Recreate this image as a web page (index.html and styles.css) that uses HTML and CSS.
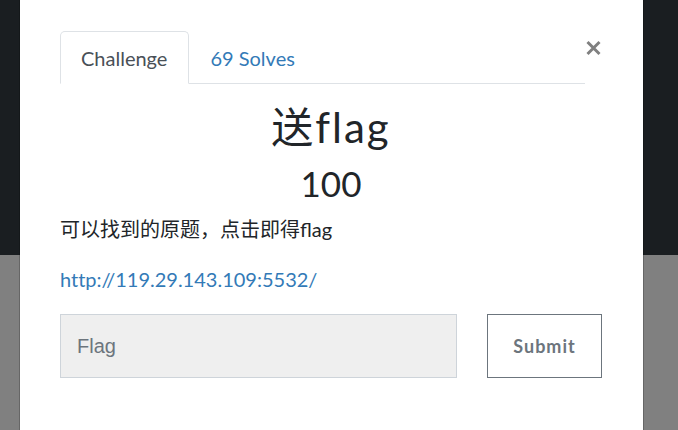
FILE: index.html
```html
<!DOCTYPE html>
<html lang="zh-CN">
<head>
<meta charset="utf-8">
<meta name="viewport" content="width=device-width, initial-scale=1">
<title>Challenge</title>
<link rel="stylesheet" href="styles.css">
</head>
<body>
<main class="modal" role="dialog" aria-labelledby="challenge-name">
  <header class="modal-header">
    <nav class="tabs">
      <a class="tab tab-active" href="#challenge">Challenge</a>
      <a class="tab" href="#solves">69 Solves</a>
    </nav>
    <button class="close" type="button" aria-label="Close">
      <svg class="close-icon" viewBox="0 0 16 16" aria-hidden="true"><path d="M2 2 14 14M14 2 2 14"/></svg>
    </button>
  </header>
  <h2 class="challenge-name" id="challenge-name">送flag</h2>
  <h3 class="challenge-value">100</h3>
  <p class="description">可以找到的原题，点击即得flag</p>
  <p class="description"><a class="link" href="http://119.29.143.109:5532/">http://119.29.143.109:5532/</a></p>
  <form class="answer">
    <input class="answer-input" type="text" name="answer" placeholder="Flag" aria-label="Flag">
    <button class="submit" type="submit">Submit</button>
  </form>
</main>
</body>
</html>
```
FILE: styles.css
```css
* {
  box-sizing: border-box;
}

body {
  margin: 0;
  padding: 0 35px 0 20px;
  min-height: 100vh;
  display: flex;
  background: linear-gradient(#1a1e21 255px, #808080 255px);
  color: #212529;
  font-family: Lato, "Noto Sans CJK SC", sans-serif;
  font-size: 20px;
  line-height: 30px;
}

.modal {
  flex: 1;
  padding: 31px 41px 40px 40px;
  background: #fff;
  box-shadow: 0 0 0 1px rgba(0, 0, 0, 0.2);
}

.modal-header {
  display: flex;
  align-items: flex-start;
  margin-bottom: 18px;
}

.tabs {
  flex: 1;
  display: flex;
  border-bottom: 1px solid #dee2e6;
}

.tab {
  margin-bottom: -1px;
  padding: 11px 21px 10px 20px;
  border: 1px solid transparent;
  border-radius: 5px 5px 0 0;
  color: #337ab7;
  text-decoration: none;
}

.tab-active {
  border-color: #dee2e6 #dee2e6 #fff;
  background: #fff;
  color: #495057;
}

.close {
  display: flex;
  margin-top: 9px;
  padding: 0;
  border: 0;
  background: none;
}

.close-icon {
  width: 17px;
  height: 16px;
  fill: none;
  stroke: #808080;
  stroke-width: 3;
}

.challenge-name,
.challenge-value {
  margin: 0;
  text-align: center;
}

.challenge-name {
  font-size: 42px;
  font-weight: 400;
  line-height: 50px;
  letter-spacing: 2px;
}

.challenge-value {
  margin: 10px 0;
  font-size: 35px;
  font-weight: 400;
  line-height: 42px;
}

.description {
  margin: 0 0 20px;
  font-weight: 400;
}

.link {
  color: #337ab7;
  font-variant-ligatures: none;
  text-decoration: none;
}

.answer {
  display: flex;
  gap: 30px;
}

.answer-input {
  flex: 1;
  min-width: 0;
  height: 64px;
  padding: 0 16px;
  border: 1px solid #ced4da;
  border-radius: 0;
  background: #efefef;
  color: #495057;
  font: 20px "Liberation Sans", sans-serif;
}

.answer-input::placeholder {
  color: #6c757d;
  opacity: 1;
}

.submit {
  min-width: 115px;
  padding: 0 25px;
  border: 1px solid #6c757d;
  background: #fff;
  color: #6c757d;
  font: 700 18px Lato, sans-serif;
  letter-spacing: 1px;
}
```
